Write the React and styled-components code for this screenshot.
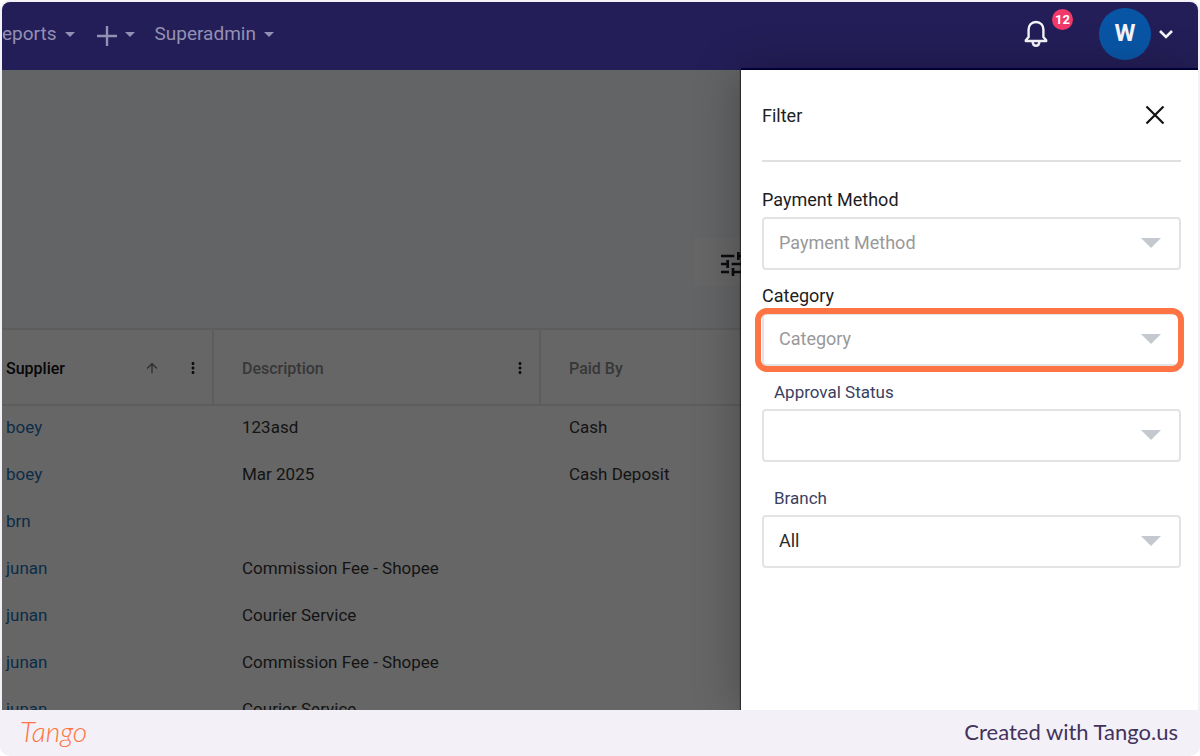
import React from 'react';
import styled, { createGlobalStyle, css } from 'styled-components';
import { MdTune, MdMoreVert, MdArrowUpward } from 'react-icons/md';

const GlobalStyle = createGlobalStyle`
  * {
    box-sizing: border-box;
  }

  body {
    margin: 0;
    background: #ffffff;
    font-family: Roboto, 'Liberation Sans', sans-serif;
  }

  button, select {
    font-family: inherit;
  }
`;

const Frame = styled.div`
  display: flex;
  flex-direction: column;
  height: 100vh;
  padding: 2px 2px 0;
  background: #f3f1f7;
  border-radius: 10px;
  overflow: hidden;
`;

const Screen = styled.div`
  flex: 1;
  min-height: 0;
  display: flex;
  flex-direction: column;
  border-radius: 8px 8px 0 0;
  overflow: hidden;
`;

const NavBar = styled.header`
  flex: none;
  display: flex;
  align-items: center;
  justify-content: space-between;
  height: 68px;
  padding: 0 25px 4px 0;
  background: #231e57;
`;

const NavLinks = styled.nav`
  display: flex;
  align-items: center;
  gap: 20px;
`;

const NavButton = styled.button`
  display: flex;
  align-items: center;
  gap: 8px;
  padding: 0;
  border: 0;
  background: none;
  color: #9490b3;
  font-size: 19px;
  line-height: 24px;
`;

const NavActions = styled.div`
  display: flex;
  align-items: center;
`;

const BellButton = styled.button`
  position: relative;
  display: flex;
  margin-right: 51px;
  padding: 0;
  border: 0;
  background: none;
  color: #f4f3f8;
`;

const BellBadge = styled.span`
  position: absolute;
  top: -11px;
  right: -25px;
  width: 21px;
  height: 21px;
  border-radius: 50%;
  background: #f1386a;
  color: #ffffff;
  font-size: 13px;
  font-weight: 700;
  line-height: 21px;
  text-align: center;
`;

const ProfileButton = styled.button`
  display: flex;
  align-items: center;
  gap: 8px;
  padding: 0;
  border: 0;
  background: none;
  color: #f4f3f8;
`;

const Avatar = styled.span`
  width: 52px;
  height: 52px;
  border-radius: 50%;
  background: #0955a5;
  font-size: 24px;
  font-weight: 700;
  line-height: 50px;
  text-align: center;
`;

const Body = styled.div`
  flex: 1;
  min-height: 0;
  display: flex;
`;

const Workspace = styled.main`
  flex: 1;
  min-width: 0;
  overflow: hidden;
  background: #636466;
`;

const Toolbar = styled.div`
  display: flex;
  justify-content: flex-end;
  height: 258px;
  padding-top: 168px;
`;

const TuneButton = styled.button`
  display: flex;
  align-items: center;
  width: 48px;
  height: 48px;
  padding: 4px 0 0 24px;
  border: 0;
  background: #666666;
  color: #0c0c10;
  overflow: hidden;

  svg {
    flex: none;
  }
`;

const Table = styled.table`
  width: 100%;
  table-layout: fixed;
  border-collapse: separate;
  border-spacing: 0;
  background: #666666;
`;

const HeadCell = styled.th`
  width: ${props => props.$width || 'auto'};
  height: 78px;
  padding: 2px 10px 0 ${props => (props.$first ? '4px' : '28px')};
  border-top: 2px solid #5d5d5d;
  border-bottom: 2px solid #5d5d5d;
  border-right: ${props => (props.$last ? '0' : '2px solid #5d5d5d')};
  color: ${props => (props.$first ? '#060606' : '#373737')};
  font-size: 16px;
  font-weight: 500;
  text-align: left;
`;

const HeadContent = styled.div`
  display: flex;
  align-items: center;
  justify-content: space-between;
`;

const HeadTools = styled.span`
  display: flex;
  align-items: center;
  gap: 24px;
  color: #0c0c0c;
`;

const IconButton = styled.button`
  display: flex;
  padding: 0;
  border: 0;
  background: none;
  color: ${props => props.$color || 'inherit'};
`;

const Cell = styled.td`
  height: 47px;
  padding: 0 0 6px ${props => (props.$first ? '4px' : '28px')};
  color: #131313;
  font-size: 17px;
  white-space: nowrap;
`;

const SupplierLink = styled.a`
  color: #0c2c47;
  text-decoration: none;
`;

const Drawer = styled.aside`
  position: relative;
  flex: 0 0 457px;
  padding: 0 17px 0 21px;
  background: #ffffff;
  box-shadow: -1px 0 1px rgba(0, 0, 0, 0.5), -4px 0 40px rgba(0, 0, 0, 0.25), 0 -2px 0 #00003f;
`;

const DrawerHeader = styled.div`
  display: flex;
  align-items: center;
  justify-content: space-between;
  height: 92px;
  padding-right: 16px;
  border-bottom: 2px solid #e0e0e0;
`;

const DrawerTitle = styled.h2`
  margin: 0;
  color: #212121;
  font-size: 18px;
  font-weight: 400;
`;

const Form = styled.form`
  display: flex;
  flex-direction: column;
  gap: 14px;
  padding-top: 26px;
`;

const Field = styled.div`
  display: flex;
  flex-direction: column;

  ${props => props.$spaced && css`
    margin-top: 10px;
  `}
`;

const Label = styled.label`
  height: 29px;
  color: #1d1d1d;
  font-size: 18px;
  line-height: 24px;

  ${props => props.$inset && css`
    padding-left: 12px;
    color: #3a4160;
    font-size: 17px;
  `}
`;

const SelectBox = styled.div`
  position: relative;
  display: flex;
  align-items: center;

  svg {
    position: absolute;
    right: 20px;
    pointer-events: none;
  }
`;

const Select = styled.select`
  appearance: none;
  width: 100%;
  height: 53px;
  padding: 0 48px 2px 15px;
  border: 2px solid #e2e3e4;
  border-radius: 4px;
  background: #ffffff;
  color: ${props => (props.$filled ? '#2b2b2b' : '#999999')};
  font-size: 18px;
`;

const Highlight = styled.span`
  position: absolute;
  inset: -5px -3px -6px -7px;
  border: 6px solid #ff7442;
  border-radius: 12px;
  pointer-events: none;
`;

const Footer = styled.footer`
  flex: none;
  display: flex;
  align-items: center;
  justify-content: space-between;
  height: 46px;
  padding: 0 20px 4px 18px;
`;

const Brand = styled.a`
  color: #ff7442;
  font-family: Lato, 'Liberation Sans', cursive;
  font-size: 28px;
  font-style: italic;
  font-weight: 300;
  line-height: 32px;
  text-decoration: none;
`;

const Credit = styled.span`
  color: #43325c;
  font-family: Lato, 'Liberation Sans', sans-serif;
  font-size: 22px;
`;

const Caret = () => (
  <svg width="10" height="5" viewBox="0 0 10 5" fill="currentColor" aria-hidden="true">
    <path d="M0 0h10L5 5z" />
  </svg>
);

const PlusIcon = () => (
  <svg width="22" height="24" viewBox="0 0 22 24" fill="none" stroke="currentColor" strokeWidth="2.4" aria-hidden="true">
    <path d="M12 4v20M2 14h20" />
  </svg>
);

const BellIcon = () => (
  <svg width="24" height="28" viewBox="0 0 24 28" fill="none" stroke="currentColor" strokeWidth="2.4" strokeLinejoin="round" aria-hidden="true">
    <path d="M12 2C7.2 2 4.6 5.4 4.6 9.6V17L1.8 20.2V21h20.4v-.8L19.4 17V9.6C19.4 5.4 16.8 2 12 2z" />
    <path d="M8.6 22c.3 2.5 1.6 3.8 3.4 3.8s3.1-1.3 3.4-3.8" />
  </svg>
);

const ChevronIcon = () => (
  <svg width="14" height="10" viewBox="0 0 14 10" fill="none" stroke="currentColor" strokeWidth="2.6" aria-hidden="true">
    <path d="M1 2l6 6 6-6" />
  </svg>
);

const CloseIcon = () => (
  <svg width="20" height="20" viewBox="0 0 20 20" fill="none" stroke="#111111" strokeWidth="2.2" aria-hidden="true">
    <path d="M1.5 1.5l17 17M18.5 1.5l-17 17" />
  </svg>
);

const SelectArrow = () => (
  <svg width="20" height="12" viewBox="0 0 20 12" fill="#c4c9d0" aria-hidden="true">
    <path d="M0 0h20L10 10z" />
  </svg>
);

const rows = [
  { supplier: 'boey', description: '123asd', paidBy: 'Cash' },
  { supplier: 'boey', description: 'Mar 2025', paidBy: 'Cash Deposit' },
  { supplier: 'brn', description: '', paidBy: '' },
  { supplier: 'junan', description: 'Commission Fee - Shopee', paidBy: '' },
  { supplier: 'junan', description: 'Courier Service', paidBy: '' },
  { supplier: 'junan', description: 'Commission Fee - Shopee', paidBy: '' },
  { supplier: 'junan', description: 'Courier Service', paidBy: '' },
];

const FilterField = ({ id, label, value = '', inset, spaced, filled, highlighted }) => (
  <Field $spaced={spaced}>
    <Label htmlFor={id} $inset={inset}>{label}</Label>
    <SelectBox>
      <Select id={id} $filled={filled}>
        <option>{value}</option>
      </Select>
      <SelectArrow />
      {highlighted && <Highlight />}
    </SelectBox>
  </Field>
);

const App = () => (
  <>
    <GlobalStyle />
    <Frame>
      <Screen>
        <NavBar>
          <NavLinks>
            <NavButton>eports <Caret /></NavButton>
            <NavButton aria-label="Add"><PlusIcon /> <Caret /></NavButton>
            <NavButton>Superadmin <Caret /></NavButton>
          </NavLinks>
          <NavActions>
            <BellButton aria-label="Notifications">
              <BellIcon />
              <BellBadge>12</BellBadge>
            </BellButton>
            <ProfileButton>
              <Avatar>W</Avatar>
              <ChevronIcon />
            </ProfileButton>
          </NavActions>
        </NavBar>

        <Body>
          <Workspace>
            <Toolbar>
              <TuneButton aria-label="Filter"><MdTune size={32} /></TuneButton>
            </Toolbar>
            <Table>
              <thead>
                <tr>
                  <HeadCell $first $width="212px">
                    <HeadContent>
                      Supplier
                      <HeadTools>
                        <IconButton aria-label="Sort" $color="#2e2e2e"><MdArrowUpward size={16} /></IconButton>
                        <IconButton aria-label="Supplier menu"><MdMoreVert size={18} /></IconButton>
                      </HeadTools>
                    </HeadContent>
                  </HeadCell>
                  <HeadCell $width="327px">
                    <HeadContent>
                      Description
                      <HeadTools>
                        <IconButton aria-label="Description menu"><MdMoreVert size={18} /></IconButton>
                      </HeadTools>
                    </HeadContent>
                  </HeadCell>
                  <HeadCell $last>Paid By</HeadCell>
                </tr>
              </thead>
              <tbody>
                {rows.map((row, index) => (
                  <tr key={index}>
                    <Cell $first><SupplierLink href="#">{row.supplier}</SupplierLink></Cell>
                    <Cell>{row.description}</Cell>
                    <Cell>{row.paidBy}</Cell>
                  </tr>
                ))}
              </tbody>
            </Table>
          </Workspace>

          <Drawer>
            <DrawerHeader>
              <DrawerTitle>Filter</DrawerTitle>
              <IconButton aria-label="Close"><CloseIcon /></IconButton>
            </DrawerHeader>
            <Form>
              <FilterField id="payment" label="Payment Method" value="Payment Method" />
              <FilterField id="category" label="Category" value="Category" highlighted />
              <FilterField id="approval" label="Approval Status" inset />
              <FilterField id="branch" label="Branch" value="All" inset spaced filled />
            </Form>
          </Drawer>
        </Body>
      </Screen>

      <Footer>
        <Brand href="#">Tango</Brand>
        <Credit>Created with Tango.us</Credit>
      </Footer>
    </Frame>
  </>
);

export default App;
